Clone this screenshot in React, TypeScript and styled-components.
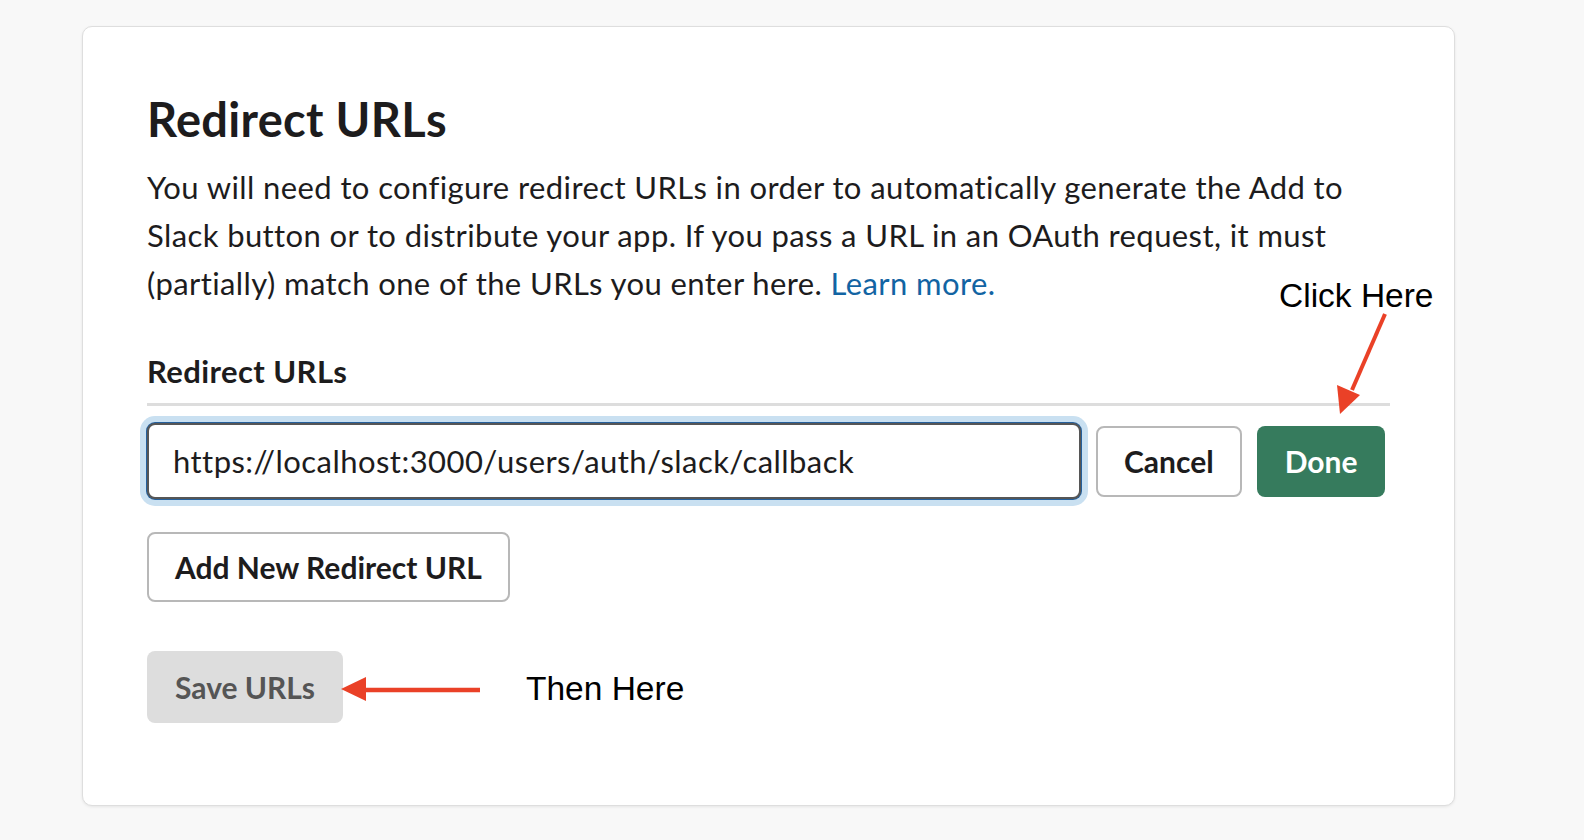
import styled, { createGlobalStyle } from 'styled-components'

const GlobalStyle = createGlobalStyle`
  html, body {
    margin: 0;
    padding: 0;
    background: #f8f8f8;
  }
  body {
    font-family: Lato, 'Noto Sans', sans-serif;
    color: #1d1c1d;
  }
  * {
    box-sizing: border-box;
  }
`

const Page = styled.div`
  width: 1584px;
  height: 840px;
  padding: 26px 0 0 82px;
  overflow: hidden;
`

const Card = styled.section`
  position: relative;
  width: 1373px;
  background: #fff;
  border: 1px solid #dedede;
  border-radius: 10px;
  box-shadow: 0 1px 3px rgba(0, 0, 0, 0.08);
  padding: 62px 64px 82px 64px;
`

const Title = styled.h2`
  margin: 0 0 14px;
  font-size: 47px;
  line-height: 60px;
  letter-spacing: 0.3px;
  font-weight: 700;
  color: #1d1c1d;
`

const Text = styled.p`
  margin: 0;
  font-size: 31px;
  line-height: 48px;
  letter-spacing: 0.4px;
  color: #1d1c1d;
`

const Link = styled.a`
  color: #1264a3;
  text-decoration: none;
`

const Label = styled.div`
  margin-top: 40px;
  font-size: 31px;
  line-height: 48px;
  letter-spacing: 0.4px;
  font-weight: 700;
`

const Divider = styled.div`
  margin-top: 8px;
  height: 3px;
  background: #dddddd;
`

const Row = styled.div`
  margin-top: 17px;
  display: flex;
  align-items: center;
  gap: 15px;
`

const UrlInput = styled.input`
  width: 934px;
  height: 76px;
  padding: 0 24px;
  border: 2px solid #565656;
  border-radius: 8px;
  box-shadow: 0 0 0 1px #26609c, 0 0 0 7px #c9e0f1;
  font-family: Lato, 'Noto Sans', sans-serif;
  font-size: 31px;
  letter-spacing: 0.45px;
  color: #1d1c1d;
  background: #fff;
  outline: none;
`

type Variant = 'outline' | 'primary' | 'disabled'

const Button = styled.button<{ $variant?: Variant; $height?: number }>`
  height: ${({ $height }) => $height ?? 71}px;
  padding: 0 26px;
  border-radius: 8px;
  font-family: Lato, 'Noto Sans', sans-serif;
  font-size: 30px;
  font-weight: 700;
  cursor: pointer;
  white-space: nowrap;
  border: 2px solid
    ${({ $variant }) => ($variant === 'outline' ? '#b8b8b8' : 'transparent')};
  background: ${({ $variant }) =>
    $variant === 'primary' ? '#367b5d' : $variant === 'disabled' ? '#dddddd' : '#fff'};
  color: ${({ $variant }) =>
    $variant === 'primary' ? '#fff' : $variant === 'disabled' ? '#555555' : '#1d1c1d'};
`

const Stack = styled.div<{ $gap: number }>`
  margin-top: ${({ $gap }) => $gap}px;
  display: flex;
`

const Note = styled.div`
  position: absolute;
  font-family: 'Liberation Sans', Arial, sans-serif;
  font-size: 33.5px;
  line-height: 33px;
  color: #000;
  white-space: nowrap;
`

const Arrow = styled.svg`
  position: absolute;
  overflow: visible;
`

const App = () => {
  return (
    <>
      <GlobalStyle />
      <Page>
        <Card>
          <Title>Redirect URLs</Title>
          <Text>
            You will need to configure redirect URLs in order to automatically generate the Add to
            Slack button or to distribute your app. If you pass a URL in an OAuth request, it must
            (partially) match one of the URLs you enter here. <Link href="#">Learn more.</Link>
          </Text>

          <Label>Redirect URLs</Label>
          <Divider />

          <Row>
            <UrlInput readOnly value="https://localhost:3000/users/auth/slack/callback" />
            <Button $variant="outline">Cancel</Button>
            <Button $variant="primary">Done</Button>
          </Row>

          <Stack $gap={33}>
            <Button $variant="outline" $height={70}>Add New Redirect URL</Button>
          </Stack>

          <Stack $gap={49}>
            <Button $variant="disabled" $height={72}>Save URLs</Button>
          </Stack>

          <Note style={{ left: 1196, top: 252 }}>Click Here</Note>
          <Note style={{ left: 443, top: 645 }}>Then Here</Note>

          <Arrow width="60" height="110" viewBox="0 0 60 110" style={{ left: 1247, top: 285 }}>
            <line x1="55" y1="2" x2="22" y2="78" stroke="#ea4127" strokeWidth="4" />
            <polygon points="10,102 7,73 30,83" fill="#ea4127" />
          </Arrow>

          <Arrow width="150" height="30" viewBox="0 0 150 30" style={{ left: 258, top: 648 }}>
            <line x1="20" y1="15" x2="139" y2="15" stroke="#ea4127" strokeWidth="4.5" />
            <polygon points="0,14 25,2 25,26" fill="#ea4127" />
          </Arrow>
        </Card>
      </Page>
    </>
  )
}

export default App
